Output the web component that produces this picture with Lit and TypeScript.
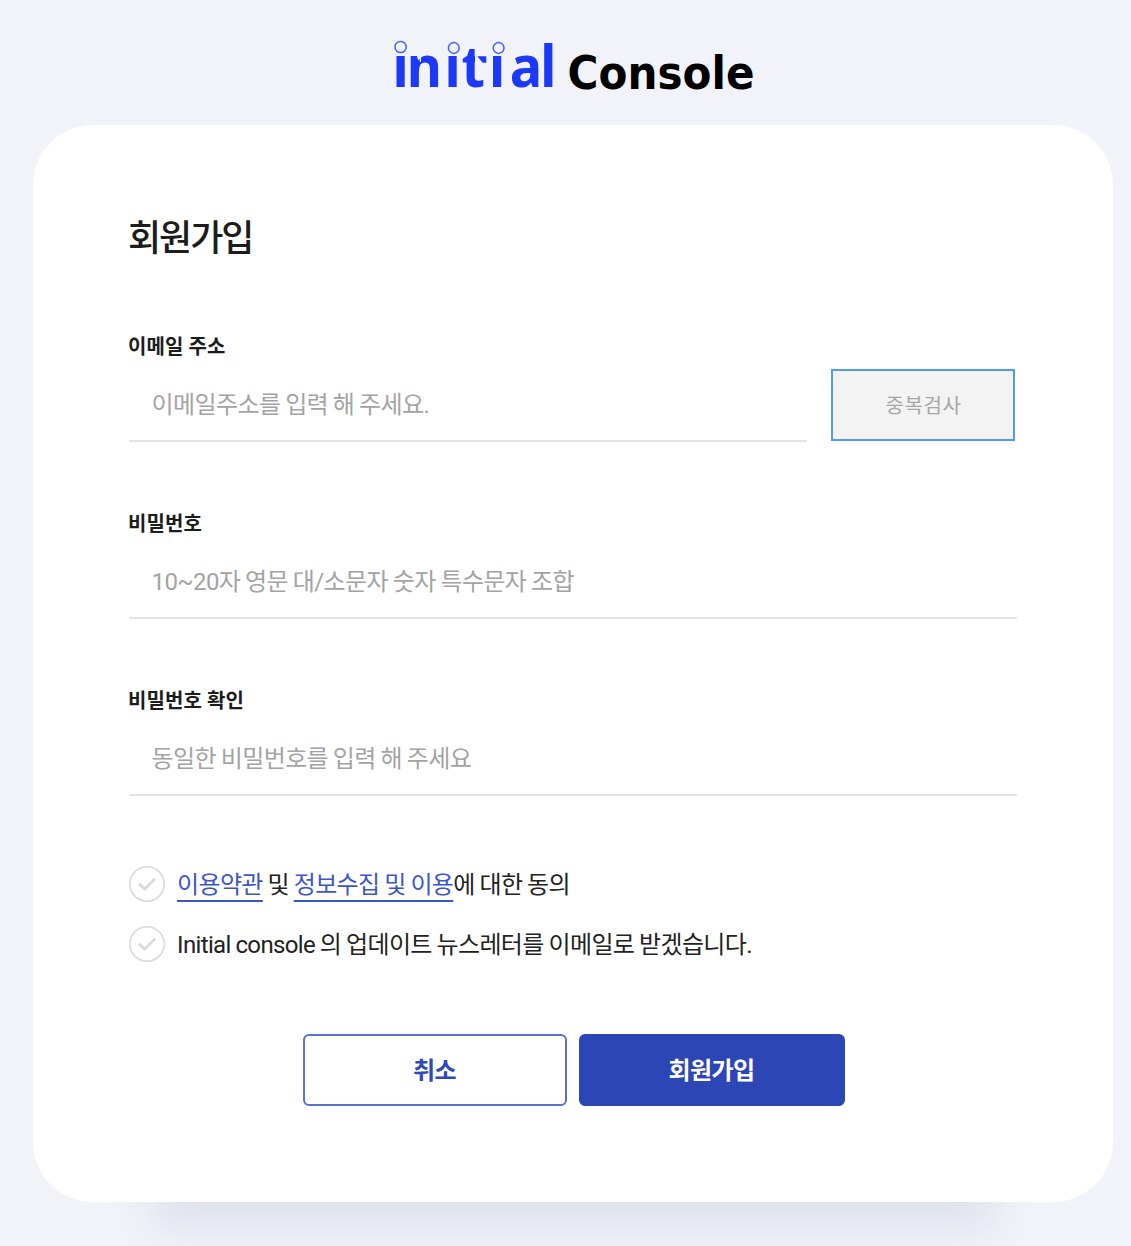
import { LitElement, html, css } from "lit";
import { customElement, property } from "lit/decorators.js";

const KR = css`Roboto, "Noto Sans CJK KR", sans-serif`;

@customElement("brand-logo")
class BrandLogo extends LitElement {
  static styles = css`
    :host { display: block; width: 400px; height: 90px; }
    svg { display: block; overflow: visible; }
    .word { font-family: "Noto Sans", sans-serif; font-weight: 700; font-size: 57px; fill: #1c39f8; }
    .product { font-family: "DejaVu Sans", sans-serif; font-weight: 700; font-size: 47px; fill: #000; }
    .cover { fill: #f1f3f8; }
    .slit { fill: none; stroke: #f1f3f8; stroke-width: 1.2; }
    .flag { fill: #1c39f8; }
    .dot { fill: none; stroke: #4660fa; stroke-width: 1.5; }
  `;
  render() {
    return html`
      <svg width="400" height="90" viewBox="-20 -20 400 90" role="img" aria-label="initial Console">
        <text class="word" transform="scale(0.95 1)" y="51.7" x="-0.6 14.4 54.1 72 101 123 155">initial</text>
        <rect class="cover" x="0" y="0" width="16" height="20.4" />
        <rect class="cover" x="51" y="0" width="17" height="20.4" />
        <rect class="cover" x="96" y="0" width="18" height="20.4" />
        <path class="slit" d="M27.4 20v7" />
        <path class="cover" d="M82 20h12v8.5H82z" />
        <path class="flag" d="M84.3 21.3h9v6.4h-3.6z" />
        <circle class="dot" cx="7.6" cy="12" r="5.6" />
        <circle class="dot" cx="60.8" cy="13" r="5.4" />
        <circle class="dot" cx="105.6" cy="13" r="5.4" />
        <text class="product" x="174.5" y="54.3" textLength="187" lengthAdjust="spacingAndGlyphs">Console</text>
      </svg>
    `;
  }
}

@customElement("form-field")
class FormField extends LitElement {
  @property() label = "";
  @property() hint = "";
  @property() kind = "text";
  static styles = css`
    :host { display: block; }
    .label { display: block; height: 30px; margin-left: -1px; font: 700 20px/32px ${KR}; letter-spacing: 0.1px; color: #1c1c1c; white-space: nowrap; }
    .row { display: flex; gap: 24px; height: 80px; align-items: flex-start; }
    .input {
      flex: 1; min-width: 0; box-sizing: border-box; height: 74px; margin: 7px 0 0; padding: 1px 22.5px 0;
      border: 0; border-bottom: 2px solid #e3e3e3; outline: 0; background: transparent;
      font: 400 24px/36px ${KR}; letter-spacing: -0.6px; word-spacing: -0.6px; color: #222;
    }
    .input::placeholder { color: #a3a3a3; opacity: 1; }
  `;
  render() {
    return html`
      <label class="label" for="field">${this.label}</label>
      <div class="row">
        <input class="input" id="field" type=${this.kind} placeholder=${this.hint} />
        <slot></slot>
      </div>
    `;
  }
}

@customElement("agree-row")
class AgreeRow extends LitElement {
  static styles = css`
    :host { display: flex; align-items: center; gap: 12px; height: 36px; }
    .mark { flex: none; display: block; }
    .text { padding-top: 2px; font: 400 24px/36px ${KR}; letter-spacing: -0.63px; word-spacing: -0.6px; color: #222; white-space: nowrap; }
  `;
  render() {
    return html`
      <svg class="mark" width="36" height="36" viewBox="0 0 36 36" fill="none">
        <circle cx="18" cy="18" r="17.2" stroke="#dadada" stroke-width="1.6" />
        <path d="M9.8 17.6 15.8 23 26 12.8" stroke="#dadada" stroke-width="2.8" />
      </svg>
      <span class="text"><slot></slot></span>
    `;
  }
}

@customElement("app-root")
class AppRoot extends LitElement {
  static styles = css`
    :host {
      display: block; box-sizing: border-box; width: 1131px; height: 1246px; overflow: hidden;
      padding: 15px 18px 0 33px; background: #f1f3f8; font-family: ${KR};
    }
    .head { display: flex; justify-content: center; height: 110px; }
    .card {
      box-sizing: border-box; width: 1080px; height: 1077px; padding: 86px 96px 0 95px;
      border-radius: 60px; background: #fff; box-shadow: 0 146px 36px -117px #e0e3ef;
    }
    .title { margin: 0; height: 56px; font: 500 36px/56px ${KR}; letter-spacing: -2px; color: #1c1c1c; }
    .fields { display: flex; flex-direction: column; gap: 67px; padding: 64px 0 0 1px; }
    .check {
      box-sizing: border-box; width: 184px; height: 72px; margin: 8px 2px 0 0; border: 2px solid #5598f4;
      background: #f3f3f3; font: 400 20px/30px ${KR}; letter-spacing: 0.6px; color: #a6a6a6; padding: 2px 0 0 1px;
    }
    .agreements { display: flex; flex-direction: column; gap: 24px; padding: 71px 0 0 1px; }
    .link {
      color: #3d56c5; text-decoration: underline; text-decoration-thickness: 1.5px;
      text-underline-offset: 7px; text-decoration-skip-ink: none;
    }
    .latin { letter-spacing: -0.64px; }
    .actions { display: flex; justify-content: center; gap: 12px; padding: 72px 0 0 2px; }
    .btn {
      box-sizing: border-box; width: 264px; height: 72px; padding: 1px 0 0; border: 2px solid #5a70c9;
      border-radius: 6px; font: 700 24px/36px ${KR}; letter-spacing: -0.6px; background: #fff; color: #3049b8;
    }
    .btn.primary { width: 266px; background: #2c46b5; border-color: #2c46b5; color: #fff; }
  `;
  render() {
    return html`
      <header class="head"><brand-logo></brand-logo></header>
      <main class="card">
        <h1 class="title">회원가입</h1>
        <div class="fields">
          <form-field label="이메일 주소" hint="이메일주소를 입력 해 주세요.">
            <button class="check">중복검사</button>
          </form-field>
          <form-field label="비밀번호" kind="password" hint="10~20자 영문 대/소문자 숫자 특수문자 조합"></form-field>
          <form-field label="비밀번호 확인" kind="password" hint="동일한 비밀번호를 입력 해 주세요"></form-field>
        </div>
        <div class="agreements">
          <agree-row><a class="link">이용약관</a> 및 <a class="link">정보수집 및 이용</a>에 대한 동의</agree-row>
          <agree-row><span class="latin">Initial console</span> 의 업데이트 뉴스레터를 이메일로 받겠습니다.</agree-row>
        </div>
        <div class="actions">
          <button class="btn">취소</button>
          <button class="btn primary">회원가입</button>
        </div>
      </main>
    `;
  }
}
